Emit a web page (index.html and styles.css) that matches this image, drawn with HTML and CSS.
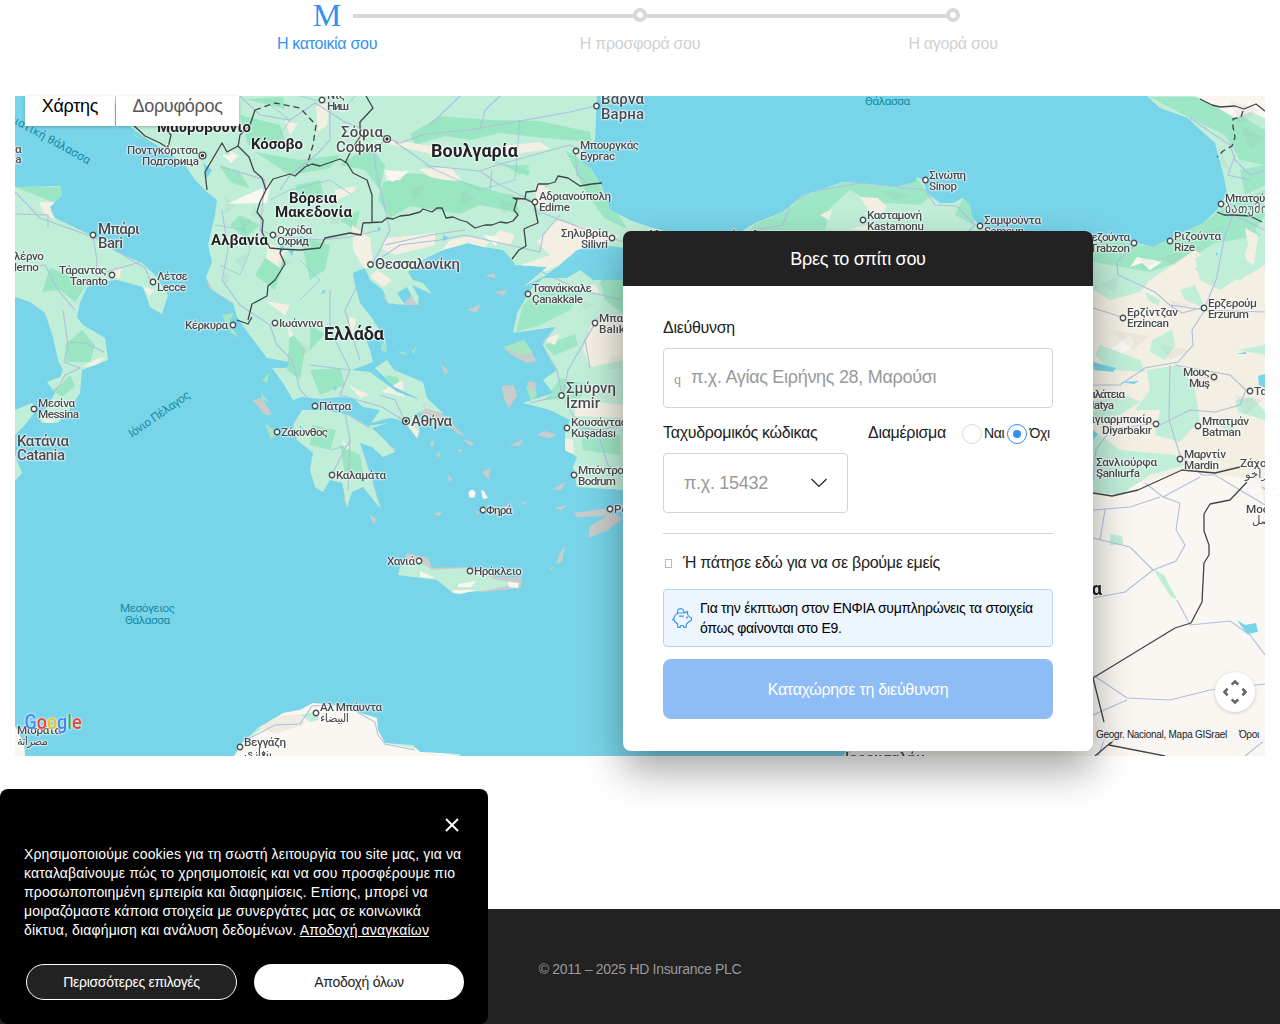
FILE: index.html
```html
<!DOCTYPE html>
<html lang="el">
<head>
<meta charset="utf-8">
<title>Βρες το σπίτι σου</title>
<link rel="stylesheet" href="styles.css">
</head>
<body>
<header class="steps">
  <div class="step active"><span class="step-icon">M</span><span class="step-label">Η κατοικία σου</span></div>
  <div class="step"><span class="step-dot"></span><span class="step-label">Η προσφορά σου</span></div>
  <div class="step"><span class="step-dot"></span><span class="step-label">Η αγορά σου</span></div>
</header>
<main class="map">
<svg class="map-canvas" viewBox="15 96 1250 660" width="1250" height="660">
  <defs>
    <clipPath id="land">
      <path d="M15 187L60 186 62 195 50 207 55 218 80 230 97 238 113 250 142 263 155 275 168 295 162 314 150 307 143 287 117 280 97 282 87 287 80 303 77 317 83 325 105 338 108 360 82 370 80 393 67 413 58 423 42 423 38 417 47 407 55 393 47 382 60 377 63 370 58 360 53 337 45 313 30 302 15 297Z"/>
      <path d="M15 410L32 403 38 408 25 425 15 435ZM15 455L18 463 22 473 15 481Z"/>
      <path d="M110 96L128 125 145 138 165 150 185 165 195 180 207 192 217 200 215 215 208 245 212 262 206 277 213 290 233 303 237 317 248 333 267 358 290 362 287 368 272 368 283 383 293 400 302 397 320 399 340 397 353 398 363 407 380 410 371 423 390 418 400 420 407 425 417 438 420 430 413 415 425 410 420 400 397 392 385 383 370 372 352 370 373 362 370 350 366 340 383 340 387 353 385 340 372 318 360 303 355 285 353 273 365 268 370 280 383 290 388 303 405 305 397 293 407 287 417 305 419 298 412 285 432 294 423 283 413 280 408 272 423 260 443 250 468 243 483 247 503 250 512 260 515 265 547 267 523 287 543 277 557 267 577 250 603 242 627 233 640 226 630 220 610 210 602 187 592 170 580 160 583 150 595 140 597 96Z"/>
      <path d="M302 410L293 425 297 440 313 453 310 470 315 487 323 492 330 480 342 483 347 507 352 492 363 487 380 508 372 480 360 443 372 447 383 457 395 452 385 440 372 428 388 423 368 426 350 415 325 410Z"/>
      <path d="M375 368L387 360 394 370 423 382 427 398 444 414 425 408 417 398 395 387Z"/>
      <path d="M640 280L593 280 580 270 567 278 543 278 530 290 523 303 517 313 513 333 555 327 542 343 550 360 557 370 543 380 553 393 523 403 550 410 570 420 565 433 565 450 577 457 573 467 577 487 623 490 700 500 900 756 1265 756 1265 96 1147 96 1160 108 1188 118 1197 127 1215 143 1223 173 1227 193 1217 210 1203 223 1173 237 1153 247 1137 243 1092 237 1040 245 977 223 972 217 970 205 963 198 953 203 940 203 927 193 923 180 917 177 915 182 897 187 860 183 843 182 820 190 803 195 783 212 755 223 720 245 650 227 620 217 603 245 640 250Z"/>
      <path d="M234 756L242 743 258 728 283 713 300 710 313 703 335 705 357 712 377 718 378 730 385 743 413 745 420 752 460 754 460 756Z"/>
      <path d="M15 726L24 744 25 756 15 756ZM843 756L850 745 1100 745V756Z"/>
      <path d="M400 567L416 559 432 570 467 568 497 580 520 583 483 591 453 593 437 580 398 575Z"/>
    </clipPath>
    <g id="city"><circle r="2.7" class="city-dot"/></g>
    <g id="capital"><circle r="3.4" class="city-dot"/><circle r="1.7" fill="#333"/></g>
  </defs>
  <rect x="15" y="96" width="1250" height="660" fill="#78d4e9"/>
  <g fill="#c9cccb">
    <path d="M206 277L218 287 234 303 230 302 209 288ZM162 314L150 307 158 306ZM253 400L262 398 272 414 265 415ZM267 425L276 431 277 436 270 439ZM403 305L415 291 419 305ZM388 303L401 305 382 295ZM485 276L494 273 496 278ZM495 292L507 290 503 296ZM467 310L481 304 477 312ZM315 487L326 480 322 492ZM343 499L350 492 348 508ZM368 492L381 508 374 488ZM369 514L376 519 374 525ZM440 364L448 370 446 375ZM504 349L515 344 530 351 537 361 527 363 515 357ZM502 386L514 385 517 396 509 408 504 399ZM527 382L535 382 537 397 530 395ZM536 435L545 431 557 435 550 438ZM509 446L524 439 519 446ZM451 423L461 432 464 437 454 431ZM464 439L474 443 472 446 466 443ZM430 443L434 440 434 445 431 447ZM458 449L462 449 460 454ZM436 454L440 452 439 459ZM448 474L452 480 449 482ZM433 513L442 512 439 516ZM476 510L480 513 477 515ZM500 509L512 502 507 508ZM482 472L490 468 489 480ZM522 502L527 502 524 505ZM553 508L568 505 562 510ZM552 489L558 486 566 481 561 490ZM573 513L610 508 609 516 578 517ZM612 513L623 518 608 530 588 538 590 526ZM565 545L562 562 556 564 560 553ZM549 569L555 566 550 571ZM398 575L407 553 428 558 432 568 467 567 497 577 522 577 521 588 483 592 442 580ZM421 598L423 599 422 600ZM385 443L396 449 384 457ZM415 412L426 405 445 416 463 435 450 427 435 418ZM408 427L420 430 418 439Z"/>
  </g>
  <g fill="#a5e6c4"><path d="M222 315L234 313 229 323 239 338 231 333ZM262 381L270 372 267 383ZM261 392L265 398 270 403 262 399ZM265 424L276 432 271 438ZM503 347L524 340 533 353 520 355ZM526 386L537 393 532 404ZM382 340L387 353 381 350ZM397 351L407 353 404 355ZM412 352L416 347 414 354ZM133 134L147 141 134 136Z"/></g>
  <g clip-path="url(#land)">
    <rect x="15" y="96" width="1250" height="660" fill="#c0eed9"/>
    <!-- Woodland -->
    <g fill="#9ae6c3">
      <path d="M15 187H62V207L48 200ZM65 345L82 330 95 345 90 362 66 362ZM70 375L75 386 62 397 52 390 62 384ZM50 268L88 283 75 302 60 290 42 292Z"/>
      <path d="M410 134L440 116 490 120 540 121 590 132 592 142 545 138 500 133 470 140 445 136 415 145ZM383 183L400 173 440 175 475 185 515 197 520 213 480 205 460 214 410 206 390 218 378 200ZM486 191L514 195 515 213 490 205ZM370 145L385 165 380 190 365 170 340 165ZM240 115L280 125 285 140 248 145ZM255 152L300 160 340 155 330 168 290 175ZM295 185L320 180 325 200 300 204ZM240 215L260 225 245 238 230 225ZM360 210L355 230 340 220ZM565 150L590 165 602 190 620 217 627 229 604 218 585 190ZM220 166L240 172 250 189 230 182ZM300 236L330 245 325 270 310 280ZM270 250L285 260 275 290 255 275ZM290 330L305 350 300 380 287 370ZM310 370L340 368 345 385 320 395ZM310 325L325 334 310 350ZM385 375L398 377 400 387 390 384ZM312 425L336 430 330 450 310 445ZM340 445L360 455 365 483 345 475ZM245 99L283 97 285 109ZM530 165L520 175 505 165ZM490 160L530 170 528 176Z"/>
      <path d="M755 224L785 212 805 195 845 182 900 188 917 178 930 197 920 205 870 202 850 190 830 208 825 230H750ZM963 198L970 206 975 226 955 215ZM1093 237L1153 247 1203 223 1227 205 1265 190V235L1215 243 1190 258 1150 272 1093 262ZM1150 97L1200 97 1240 115 1265 130V165L1240 160 1225 135 1190 118ZM1240 170L1265 165V185L1245 195ZM523 305L545 285 585 287 570 310 540 325 516 332ZM545 345L575 334 578 345 554 356ZM560 378L590 385 580 398 545 400ZM600 280L625 275V315L605 300ZM580 425L620 435V455L583 450Z" opacity=".9"/>
    </g>
    <g fill="#f3efe3">
      <path d="M39 202L57 202 50 211 55 220 44 213ZM109 270L121 269 120 278 111 278ZM82 367L98 358 106 357 96 366ZM141 286L155 290 149 296ZM230 150L239 156 230 164ZM268 243L286 250 280 268 266 258ZM316 106L330 101 327 125 318 132ZM285 121L298 124 290 135ZM419 169L450 167 462 181 445 180 430 177ZM370 140L405 142 460 150 540 142 550 149 515 154 480 151 440 156ZM335 190L357 186 352 194 335 200ZM386 238L435 233 435 245 395 255 380 248ZM450 240L470 236 490 242 480 252 455 248 440 252ZM352 225L370 238 373 262 365 270 353 250ZM384 173L409 170 400 180 387 181ZM377 270L392 280 383 287 370 276ZM265 301L290 305 285 315ZM350 317L356 319 352 337 346 335ZM382 391L403 380 404 397 383 392ZM402 418L418 430 417 440 406 430ZM349 385L369 395 360 398ZM341 441L352 446 346 450ZM288 325L294 335 289 338ZM520 265L550 255 537 242 555 220 620 236 610 240 590 252 560 265 545 271ZM535 182L550 190 545 210 537 207ZM592 320L625 315 625 360 590 367 583 350ZM543 340L560 333 555 345ZM565 438L573 440 574 453 565 453ZM575 400L625 405V418L575 416ZM580 290L595 284 600 294ZM860 197L878 198 887 207 880 214 868 210ZM820 215L832 209 829 220ZM850 229L870 224 880 232ZM40 418L55 420 50 425ZM500 230L515 235 510 245 490 240Z"/>
      <path d="M1093 262L1150 280 1195 250 1203 256 1195 270 1240 280 1265 265V500H1093ZM1245 228L1258 235 1254 265 1243 259 1248 245Z"/>
    </g>
    <g fill="#faf7f2">
      <path d="M234 756L242 743 283 713 313 703 335 705 377 718 378 730 385 743 460 756ZM15 726H25V756H15Z"/>
      <path d="M1093 495L1140 483 1180 471 1260 480 1265 505V756H850V745ZM1093 460L1130 465 1150 475 1120 492 1093 497ZM1110 350L1130 335 1135 345 1120 355ZM483 235L499 237 496 246ZM226 204L270 185 267 203Z"/>
      <path d="M1195 96L1265 96V118L1250 112 1235 118 1218 108ZM384 170L409 172 398 178 392 182ZM1162 262L1150 270 1142 263 1130 267 1137 257ZM222 155L235 155 232 163Z"/>
    </g>
    <g fill="#c0eed9">
      <path d="M1093 262L1150 280 1140 292 1110 300 1093 290ZM1195 258L1240 240 1250 270 1220 290 1200 280ZM1180 290L1195 285 1205 308 1185 300ZM1145 292L1160 300 1158 306 1148 300ZM1152 340L1172 330 1175 345 1165 360 1150 352ZM1100 345L1140 360 1145 372 1110 370 1095 355ZM1147 370L1180 365 1195 390 1200 420 1180 442 1155 435 1160 410 1135 410 1150 390ZM1093 402L1125 395 1140 402 1120 415 1093 420ZM1210 420L1240 420 1230 432ZM1235 400L1252 397 1265 412V420L1238 412ZM1093 430L1120 450 1175 455 1185 465 1150 475 1120 495 1093 492ZM1110 534L1122 536 1123 544 1110 545ZM1153 569L1164 575 1177 599 1171 597 1160 580ZM1255 230L1265 215V240ZM1238 350L1265 345V355ZM300 715L317 711 319 720 310 722Z"/>
      <path d="M240 720L300 714 305 724 275 734Z" fill="#eeece0"/>
    </g>
    <g fill="#9b9d9b" opacity=".1">
      <path d="M225 195L235 205 225 215ZM240 220L252 218 242 235ZM235 260L248 252 242 268ZM222 270L232 276 225 288ZM255 205L260 218 250 215ZM300 340L312 350 302 356ZM410 190L425 185 415 200ZM460 190L476 198 462 205ZM500 200L515 205 503 215ZM280 255L292 262 278 268ZM330 210L345 222 330 225ZM1110 330L1150 336 1133 350ZM1160 258L1185 250 1175 266ZM1205 232L1225 225 1215 242ZM1230 100L1260 110 1240 125ZM1190 380L1210 370 1220 382ZM1100 285L1120 275 1115 292ZM1170 300L1190 305 1175 310ZM1240 125L1265 138 1250 150ZM1140 255L1155 262 1143 270ZM1220 150L1230 170 1222 165ZM1160 345L1190 350 1170 360ZM1235 395L1262 400 1245 415ZM990 218L1005 226 995 228ZM880 190L910 195 895 200ZM610 357L622 355 622 368 606 370ZM580 300L595 305 585 310Z"/>
    </g>
    <!-- Roads and rivers -->
    <g fill="none" stroke="#afbfdc" stroke-width="1.1">
      <path d="M15 192L40 218 93 237 97 260 96 275 140 262M48 228V215L15 214M15 270L45 265 58 290 75 310M93 237L145 268 152 285M63 310L68 345 64 362 80 368 65 375 60 385 42 405M68 342L85 343 104 352"/>
      <path d="M240 96L260 115 290 120 315 103 345 122 387 138 400 143 425 134 470 130 570 112 595 106M387 138L374 150 376 170 390 230 380 250 372 264M395 142L430 166 480 171 497 165 570 145 580 150M480 171L500 185 530 200 540 215M430 125L460 96M480 130L485 110 500 96M492 170L490 190M575 150L577 175 590 185M330 96L330 140 316 155 290 175 280 190M220 166L265 180 260 230 275 236 320 240 350 237 380 230M222 210L228 250 222 280 240 305 270 325 277 345 292 360 300 390 314 405 345 413 370 428M330 290L330 330 350 370 340 395 382 407 405 421 395 400 380 395M365 270L345 310 352 335 360 360M372 264L400 245 440 240 465 235 540 252 543 235 560 215M540 212L600 235 625 242M385 245L430 235 465 230M350 370L310 365M345 413L350 440 333 472M350 440L348 490M540 271L580 290 623 300M563 395L568 370 600 315M590 368L585 340 600 315M563 395L530 403M565 400L580 428 600 430 623 425M600 440L608 465 620 475M555 327L542 345 557 370 562 395"/>
      <path d="M755 230L783 225 790 205 810 192 860 183 925 190 935 205 957 206 975 225 960 240M1137 243L1117 262 1118 275 1155 292 1172 307 1182 313 1205 307 1216 280 1225 235 1233 215 1265 230M1205 310L1192 330 1193 345 1178 362 1145 368 1120 385 1093 385M1093 308L1125 318M1173 307L1170 305 1205 310 1265 312M1190 118L1230 145 1235 160 1250 175 1265 170M1235 155L1228 175 1250 180M1227 193L1233 215M1170 365L1169 420 1180 455 1202 475 1215 475 1240 490 1265 505M1175 365L1230 375 1246 390 1240 405 1215 412 1190 410 1160 425M1156 423L1110 430 1096 450 1093 480M1145 483L1163 497 1180 503 1176 530 1185 545 1176 561 1153 570 1125 592 1093 598M1163 497L1200 477M1093 538L1130 547 1153 570M1093 510L1130 507 1160 497M1105 510L1100 540M1177 600L1190 625 1230 621 1250 635 1265 655M1093 675L1127 698 1170 700 1210 690 1265 684M1093 715L1127 700M1245 756L1265 740M1098 756L1105 738M357 712L375 722 378 735 385 744 415 750M240 743L275 725 300 724 312 706 335 705"/>
    </g>
    <g fill="none" stroke="#9cc4dc" stroke-width=".8"><path d="M215 225L245 230 250 250 240 275 220 265M270 200L290 190 330 180 352 195M300 96L345 108 355 96M270 105L290 120 270 150M520 120L515 180 480 190 425 165M300 260L320 280 300 300M620 260L600 285M330 450L350 445"/></g>
  </g>
  <!-- Lakes -->
  <g fill="#78d4e9"><path d="M203 163L212 170 207 178ZM279 243L285 244 282 253ZM288 250L294 249 292 256ZM377 227L381 228 379 232ZM443 235L449 238 443 241ZM323 290L326 291 321 295ZM333 386L337 388 335 391ZM1093 362L1116 368 1113 372 1094 370ZM1120 382L1139 381 1134 384ZM1258 376L1265 374V388L1259 385ZM1237 620L1245 625 1256 623 1258 632 1247 634ZM1093 430L1098 434 1093 440ZM1216 252L1218 254 1216 256ZM1236 354L1246 352 1246 354ZM1260 486L1265 488V490ZM300 425L306 432 299 427Z"/></g>
  <g fill="#faf7f2"><ellipse cx="472" cy="494" rx="3.300" ry="4"/><path d="M481 490L484 491 488 498 483 499ZM420 571L435 578 420 577ZM458 584L476 581 471 587 458 587ZM453 590L477 590 460 594 454 593ZM508 582L519 583 518 588 509 587Z"/></g>
  <!-- National borders -->
  <g fill="none" stroke="#414547" stroke-width="1.3" stroke-linejoin="round">
    <path d="M130 122L145 136 160 143 168 148 171 135 165 128M207 190L205 172 212 160 222 143 227 152 238 146 243 151 249 157 254 171 262 178 266 190 260 202 257 212 263 220 262 232 270 248 281 249 280 253 285 264 275 280 268 286 267 296 252 304 248 320M238 147L240 135 250 125 255 110M237 320L248 324 252 317M266 190L273 179 290 174 295 176 305 167 312 164 320 166 340 159 347 163 353 173 367 180 372 195V222M345 163L353 147 360 137 360 122 373 108 366 96M281 249L300 250 320 248 325 238 350 233 361 235 363 223 382 222 387 218 393 219 400 216 409 215 420 212 423 209 432 212 437 208 442 208 446 218 453 217 460 220 467 222 475 228 485 225 492 225 500 222 507 223 513 221 518 215 514 210 517 200 513 198 525 199 534 203 538 223 528 227 524 229 526 246 519 250 512 259M525 199L526 192 536 191 538 184 548 184 555 182 558 176 568 178 580 186 592 184 602 183"/>
    <path d="M1200 99L1212 105 1220 107 1235 106 1244 109 1256 104 1265 111M1217 212L1224 215 1233 215 1250 216 1262 222"/>
    <path d="M1093 493L1112 496 1138 490 1160 480 1182 470 1215 473 1240 467M1247 482L1230 500 1210 504 1204 514 1204 531 1209 545 1209 555 1204 563 1202 602 1191 623 1175 628 1093 678 1104 722M1095 756L1115 739 1109 745 1165 756"/>
    <path d="M255 110L275 103 300 108 316 125 313 145 307 165M1243 111L1241 117 1233 119 1233 127 1235 137 1232 146 1223 151 1217 157" stroke-dasharray="6 4"/>
  </g>
  <!-- Place markers -->
  <use href="#city" x="93" y="235"/><use href="#city" x="112" y="275"/><use href="#city" x="153" y="282"/><use href="#capital" x="202.500" y="155.500"/><use href="#city" x="273" y="235"/><use href="#city" x="322" y="100"/><use href="#capital" x="387" y="139"/><use href="#city" x="596.500" y="106"/><use href="#city" x="576" y="151"/><use href="#city" x="535" y="202"/><use href="#city" x="612" y="238"/><use href="#city" x="370.500" y="264.500"/><use href="#city" x="528" y="294"/><use href="#city" x="233" y="325"/><use href="#city" x="275" y="323"/><use href="#city" x="595" y="323"/><use href="#city" x="34" y="409"/><use href="#city" x="315" y="406"/><use href="#city" x="277" y="432"/><use href="#capital" x="406" y="421"/><use href="#city" x="332" y="475"/><use href="#city" x="483" y="510"/><use href="#city" x="561.500" y="395.500"/><use href="#city" x="567" y="428"/><use href="#city" x="574" y="475"/><use href="#city" x="610" y="509"/><use href="#city" x="419" y="561"/><use href="#city" x="470" y="571"/><use href="#city" x="316" y="713"/><use href="#city" x="240" y="747"/><use href="#city" x="925.500" y="180"/><use href="#city" x="863" y="220"/><use href="#city" x="980" y="226"/><use href="#city" x="1134" y="243"/><use href="#city" x="1170" y="241"/><use href="#city" x="1221" y="204"/><use href="#city" x="1123" y="318"/><use href="#city" x="1204" y="308"/><use href="#city" x="1214" y="377"/><use href="#city" x="1250" y="391"/><use href="#city" x="1156" y="424"/><use href="#city" x="1198" y="426"/><use href="#city" x="1180" y="459"/>
  <g class="sea">
    <text x="865" y="104.500" textLength="45">Θάλασσα</text><text x="120" y="612" textLength="55">Μεσόγειος</text><text x="125" y="624" textLength="45">Θάλασσα</text>
    <text transform="translate(132 438) rotate(-35)" textLength="72">Ιόνιο Πέλαγος</text><text transform="translate(-5 113) rotate(29)" textLength="106">Αδριατική θάλασσα</text>
  </g>
  <g class="place">
    <text x="127" y="154" textLength="71">Ποντγκόριτσα</text><text x="142" y="165" textLength="57">Подгорица</text>
    <text x="-16" y="153">Φότζια</text><text x="-14" y="163">Foggia</text><text x="59" y="274" textLength="48">Τάραντας</text><text x="70" y="285" textLength="38">Taranto</text><text x="157" y="280" textLength="31">Λέτσε</text><text x="157" y="291" textLength="29">Lecce</text><text x="14" y="260" textLength="30">λέρνο</text><text x="14" y="271" textLength="25">lerno</text>
    <text x="277" y="234" textLength="35">Οχρίδα</text><text x="277" y="245" textLength="32">Охрид</text><text x="327" y="99">Νις</text><text x="327" y="110" textLength="22">Ниш</text><text x="580" y="149" textLength="59">Μπουργκάς</text><text x="580" y="160" textLength="35">Бургас</text>
    <text x="539" y="200" textLength="72">Αδριανούπολη</text><text x="539" y="211" textLength="31">Edirne</text><text x="561" y="237" textLength="47">Σηλυβρία</text><text x="581" y="248" textLength="27">Silivri</text><text x="532" y="292" textLength="60">Τσανάκκαλε</text><text x="532" y="303" textLength="51">Çanakkale</text>
    <text x="185" y="329" textLength="43">Κέρκυρα</text><text x="279" y="327" textLength="44">Ιωάννινα</text><text x="599" y="322">Μπαλίκ</text><text x="599" y="333">Balıkesir</text><text x="38" y="407" textLength="37">Μεσίνα</text><text x="38" y="418" textLength="41">Messina</text><text x="319" y="410" textLength="32">Πάτρα</text><text x="281" y="436" textLength="47">Ζάκυνθος</text><text x="336" y="479" textLength="50">Καλαμάτα</text><text x="486" y="514" textLength="26">Φηρά</text>
    <text x="571" y="426" textLength="60">Κουσάντασι</text><text x="571" y="437" textLength="45">Kuşadası</text><text x="578" y="474" textLength="58">Μπόντρουμ</text><text x="578" y="485" textLength="38">Bodrum</text><text x="614" y="513">Ρόδος</text><text x="387" y="565" textLength="28">Χανιά</text><text x="474" y="575" textLength="48">Ηράκλειο</text><text x="320" y="711" textLength="62">Αλ Μπάυντα</text><text x="320" y="722" textLength="29">البيضاء</text><text x="244" y="746" textLength="42">Βεγγάζη</text><text x="244" y="757" textLength="28">بنغازي</text><text x="17" y="734" textLength="44">Μισράτα</text><text x="17" y="745" textLength="31">مصراتة</text>
    <text x="929" y="179" textLength="37">Σινώπη</text><text x="929" y="190" textLength="28">Sinop</text><text x="867" y="219" textLength="55">Κασταμονή</text><text x="867" y="230" textLength="57">Kastamonu</text><text x="984" y="224" textLength="57">Σαμψούντα</text><text x="984" y="235" textLength="40">Samsun</text>
    <text x="1068" y="241" textLength="62">Τραπεζούντα</text><text x="1090" y="252" textLength="40">Trabzon</text><text x="1174" y="240" textLength="47">Ριζούντα</text><text x="1174" y="251" textLength="21">Rize</text><text x="1225" y="202" textLength="50">Μπατούμι</text><text x="1225" y="213" textLength="42">ბათუმი</text><text x="1127" y="316" textLength="51">Ερζίντζαν</text><text x="1127" y="327" textLength="42">Erzincan</text><text x="1208" y="307" textLength="49">Ερζερούμ</text><text x="1208" y="318" textLength="41">Erzurum</text>
    <text x="1183" y="376" textLength="27">Μους</text><text x="1189" y="387" textLength="21">Muş</text><text x="1254" y="395">Τατβάν</text><text x="1080" y="398" textLength="45">Μαλάτεια</text><text x="1076" y="409" textLength="38">Malatya</text><text x="1078" y="423" textLength="74">Ντιγιαρμπακίρ</text><text x="1102" y="434" textLength="50">Diyarbakır</text><text x="1202" y="425" textLength="47">Μπατμάν</text><text x="1202" y="436" textLength="39">Batman</text><text x="1184" y="458" textLength="42">Μαρντίν</text><text x="1184" y="469" textLength="35">Mardin</text><text x="1096" y="466" textLength="61">Σανλιούρφα</text><text x="1096" y="477" textLength="44">Şanlıurfa</text><text x="1240" y="467">Ζάχο</text><text x="1245" y="478">زاخو</text><text x="1246" y="513">Μοσούλη</text><text x="1252" y="524">الموصل</text>
  </g>
  <g class="place town">
    <text x="98" y="234" textLength="42">Μπάρι</text><text x="98" y="248" textLength="25">Bari</text><text x="341" y="137" textLength="42">Σόφια</text><text x="336" y="152" textLength="46">София</text><text x="601" y="104" textLength="43">Βάρνα</text><text x="601" y="119" textLength="43">Варна</text><text x="375" y="269" textLength="85">Θεσσαλονίκη</text><text x="411" y="426" textLength="41">Αθήνα</text><text x="17" y="446" textLength="52">Κατάνια</text><text x="17" y="460" textLength="48">Catania</text><text x="566" y="393" textLength="50">Σμύρνη</text><text x="566" y="408" textLength="34">İzmir</text><text x="845" y="763" textLength="80">Ιερουσαλήμ</text><text x="649" y="241" textLength="120">Κωνσταντινούπολη</text>
  </g>
  <g class="country">
    <text x="157" y="132" textLength="94">Μαυροβούνιο</text><text x="251" y="149" textLength="52">Κόσοβο</text><text x="289" y="203" textLength="48">Βόρεια</text><text x="275" y="217" textLength="77">Μακεδονία</text><text x="211" y="245" textLength="57">Αλβανία</text>
    <text class="large" x="431" y="157" textLength="87">Βουλγαρία</text><text class="large" x="324" y="340" textLength="60">Ελλάδα</text><text class="large" x="1050" y="595" textLength="52">Συρία</text>
  </g>
  <text class="google" x="24.500" y="729" textLength="57" lengthAdjust="spacingAndGlyphs"><tspan fill="#4285f4">G</tspan><tspan fill="#ea4335">o</tspan><tspan fill="#fbbc04">o</tspan><tspan fill="#4285f4">g</tspan><tspan fill="#34a853">l</tspan><tspan fill="#ea4335">e</tspan></text>
</svg>
  <div class="map-types"><span class="map-type selected">Χάρτης</span><span class="map-type">Δορυφόρος</span></div>
  <div class="map-camera"><svg width="24" height="24" viewBox="0 0 24 24" fill="none" stroke="#666" stroke-width="2.600"><path d="M8.700 4.600L12 1.500l3.300 3.100M8.700 19.400L12 22.500l3.300-3.100M4.600 8.700L1.500 12l3.100 3.300M19.400 8.700L22.500 12l-3.100 3.300"/></svg></div>
  <div class="map-credit"><span>Inst. Geogr. Nacional, Mapa GISrael</span><span>Όροι</span></div>
  <section class="card">
    <h1 class="card-title">Βρες το σπίτι σου</h1>
    <form class="card-body">
      <label class="field-label">Διεύθυνση</label>
      <div class="field address"><span class="search-icon">q</span><span>π.χ. Αγίας Ειρήνης 28, Μαρούσι</span></div>
      <div class="row">
        <div class="postal">
          <label class="field-label">Ταχυδρομικός κώδικας</label>
          <div class="field select"><span>π.χ. 15432</span><svg width="16" height="10" viewBox="0 0 16 10" fill="none" stroke="#222" stroke-width="1.200"><path d="M.500 1L8 8.500 15.500 1"/></svg></div>
        </div>
        <div class="apartment"><span class="field-label">Διαμέρισμα</span><span class="radio"></span><span class="radio-label">Ναι</span><span class="radio checked"></span><span class="radio-label">Όχι</span></div>
      </div>
      <div class="locate"><span class="locate-icon"></span><span>Ή πάτησε εδώ για να σε βρούμε εμείς</span></div>
      <div class="notice">
        <svg width="20" height="20" viewBox="0 0 20 20" fill="none" stroke="#3b95f5" stroke-width="1.200" stroke-linejoin="round"><path d="M12.500 5l3-1.800v3.300l2 2.500 2 .5v3l-2 .8-3 2.700-.5 3.400h-2.300l-.4-1.900H8.700l-.4 1.900H6l-.5-3.500C3.500 14.800 2 13 1.800 11 2.200 8 4.500 5.600 7 5zM0 12.200l1.800-1.400M5.800 5.300C5 3 6 .6 8.500.6S12.200 2.800 11.800 5M7 8.200h5"/><circle cx="15" cy="9.500" r=".4"/></svg>
        <p>Για την έκπτωση στον ΕΝΦΙΑ συμπληρώνεις τα στοιχεία<br>όπως φαίνονται στο Ε9.</p>
      </div>
      <button class="submit" type="button">Καταχώρησε τη διεύθυνση</button>
    </form>
  </section>
</main>
<footer class="footer">© 2011 – 2025 HD Insurance PLC</footer>
<aside class="cookies">
  <svg class="close" width="14" height="14" viewBox="0 0 14 14" stroke="#fff" stroke-width="2"><path d="M1 1l12 12M13 1L1 13"/></svg>
  <p class="cookie-text">Χρησιμοποιούμε cookies για τη σωστή λειτουργία του site μας, για να<br>καταλαβαίνουμε πώς το χρησιμοποιείς και να σου προσφέρουμε πιο<br>προσωποποιημένη εμπειρία και διαφημίσεις. Επίσης, μπορεί να<br>μοιραζόμαστε κάποια στοιχεία με συνεργάτες μας σε κοινωνικά<br>δίκτυα, διαφήμιση και ανάλυση δεδομένων. <a>Αποδοχή αναγκαίων</a></p>
  <div class="cookie-actions"><button class="pill outline">Περισσότερες επιλογές</button><button class="pill solid">Αποδοχή όλων</button></div>
</aside>
</body>
</html>
```
FILE: styles.css
```css
* { box-sizing: border-box; }
body { margin: 0; height: 1024px; overflow: hidden; background: #fff; color: #222; font-family: "Liberation Sans", Arial, sans-serif; font-size: 16px; letter-spacing: -0.3px; }
p, h1 { margin: 0; font-weight: 400; }
button { font: inherit; letter-spacing: inherit; border: 0; padding: 0; }

.steps { height: 96px; display: grid; grid-template-columns: repeat(3, 313px); justify-content: center; }
.step { position: relative; display: grid; grid-template-rows: 30px 28px; justify-items: center; align-items: center; color: #d0d0d0; height: 58px; }
.step.active { color: #3391f3; }
.step-icon { font: 32px/30px "Liberation Serif", serif; letter-spacing: 0; }
.step-label { line-height: 28px; }
.step-dot { width: 14px; height: 14px; border: 4px solid #d8d8d8; border-radius: 50%; background: #fff; }
.step + .step::before { content: ""; position: absolute; height: 4px; top: 14px; right: 163px; width: 300px; background: #d8d8d8; }
.step:nth-child(2)::before { width: 281px; }

.map { position: relative; height: 660px; margin: 0 15px; }
.map-canvas { display: block; }
.map text { letter-spacing: 0; }
.city-dot { fill: #fff; stroke: #4b4e50; stroke-width: 1.4; }
.place, .country { filter: drop-shadow(0 0 .6px #fff) drop-shadow(0 0 .8px #fff) drop-shadow(0 0 .6px #fff); }
.place { font: 500 11.7px Roboto, "Noto Sans", "DejaVu Sans", sans-serif; fill: #484c4e; }
.town { font-size: 15px; }
.country { font: 700 15px Roboto, "Noto Sans", sans-serif; fill: #222527; }
.country .large { font-size: 18px; }
.sea { font: 11.7px Roboto, "Noto Sans", sans-serif; fill: #168ca4; }
.google { font: 500 20px Roboto, sans-serif; filter: drop-shadow(0 0 .6px #fff) drop-shadow(0 0 .8px #fff); }

.map-types { position: absolute; left: 10px; top: 0; display: flex; height: 30px; gap: 1px; }
.map-type { background: #fff; color: #565656; font-size: 18px; line-height: 20px; width: 123px; text-align: center; box-shadow: 0 1px 4px -1px rgba(0,0,0,.4); }
.map-type.selected { color: #000; width: 90px; }
.map-camera { position: absolute; right: 10px; bottom: 44px; width: 40px; height: 40px; border-radius: 50%; background: #fff; display: grid; place-items: center; box-shadow: 0 1px 4px -1px rgba(0,0,0,.3); }
.map-credit { position: absolute; right: 0; bottom: 14px; height: 14px; padding-right: 6px; background: rgba(245,245,245,.7); font-size: 10px; line-height: 14px; letter-spacing: -.28px; display: flex; gap: 12px; }

.card { position: absolute; left: 608px; top: 135px; width: 470px; height: 520px; border-radius: 8px; background: #fff; box-shadow: 0 20px 40px rgba(0,0,0,.35); }
.card-title { height: 55px; border-radius: 8px 8px 0 0; background: #222; color: #fff; font-size: 18px; line-height: 56px; text-align: center; }
.card-body { padding: 30px 40px 0; }
.field-label { display: block; line-height: 24px; }
.field { height: 60px; border: 1px solid #d3d3d3; border-radius: 4px; color: #999; font-size: 18px; display: flex; align-items: center; }
.address { margin: 8px 0 13px; padding: 0 10px 1px; gap: 10px; }
.search-icon { font: 14px "Liberation Serif", serif; letter-spacing: 0; padding-top: 5px; }
.row { display: flex; gap: 20px; height: 113px; border-bottom: 1px solid #d3d3d3; }
.postal { width: 185px; white-space: nowrap; }
.select { margin-top: 8px; padding: 0 20px; justify-content: space-between; }
.apartment { display: flex; height: 24px; align-items: center; }
.apartment .field-label { width: 94px; }
.radio { width: 20px; height: 20px; border: 1px solid #d8d8d8; border-radius: 50%; margin-top: 2px; display: grid; place-items: center; }
.radio.checked { border-color: #3391f3; margin-left: 3px; }
.checked::after { content: ""; width: 8px; height: 8px; border-radius: 50%; background: #3391f3; }
.radio-label { font-size: 14px; margin: 0 0 0 2px; letter-spacing: -.3px; }
.locate { display: flex; align-items: center; height: 55px; padding: 3px 0 0 2px; gap: 11px; }
.locate-icon { width: 7px; height: 9px; border: 1px solid #bbb; margin-top: 1px; }
.notice { height: 58px; border: 1px solid #b5d2f6; border-radius: 4px; background: #edf5ff; padding: 0 8px; display: flex; align-items: center; gap: 8px; color: #000; font-size: 14px; line-height: 20px; letter-spacing: -.28px; white-space: nowrap; }
.submit { display: block; width: 390px; height: 60px; margin-top: 12px; padding-top: 2px; border-radius: 8px; background: #8ebcf4; color: #fff; }

.footer { height: 115px; margin-top: 153px; padding-top: 4px; background: #222; color: #999; font-size: 14px; display: grid; place-items: center; }
.cookies { position: fixed; left: 0; bottom: 0; width: 488px; height: 235px; border-radius: 8px; background: #000; color: #fff; padding: 29px 24px 0; display: flex; flex-direction: column; font-size: 14px; letter-spacing: .14px; }
.close { align-self: flex-end; margin-right: 5px; flex: none; }
.cookie-text { margin-top: 13px; line-height: 19px; white-space: nowrap; }
.cookie-text a { text-decoration: underline; }
.cookie-actions { display: flex; justify-content: space-between; margin: 24px 0 0 2px; letter-spacing: -.28px; }
.pill { width: 211px; height: 36px; border-radius: 18px; }
.outline { border: 1px solid #fff; background: #222; color: #fff; }
.solid { width: 210px; background: #fff; color: #222; }
```
